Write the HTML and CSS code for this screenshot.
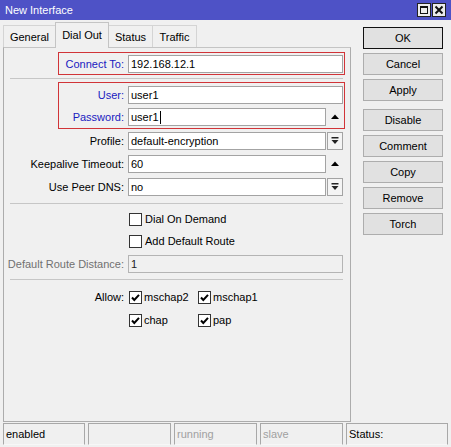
FILE: index.html
```html
<!DOCTYPE html>
<html>
<head>
<meta charset="utf-8">
<title>New Interface</title>
<link rel="stylesheet" href="styles.css">
</head>
<body>
<div class="window">
  <div class="titlebar">
    <span class="title">New Interface</span>
    <div class="tb-btns">
      <span class="tb-btn"><svg width="10" height="10" viewBox="0 0 10 10"><rect x="1.5" y="1.5" width="7" height="7" fill="none" stroke="#111" stroke-width="1"/><rect x="1" y="1" width="8" height="2" fill="#111"/></svg></span>
      <span class="tb-btn"><svg width="10" height="10" viewBox="0 0 10 10"><path d="M1.5 1.5 L8.5 8.5 M8.5 1.5 L1.5 8.5" stroke="#111" stroke-width="2"/></svg></span>
    </div>
  </div>
  <div class="main">
    <div class="left">
      <div class="tabs">
        <div class="tab t-general">General</div>
        <div class="tab t-dial active">Dial Out</div>
        <div class="tab t-status">Status</div>
        <div class="tab t-traffic">Traffic</div>
      </div>
      <div class="panel">
        <div class="redbox rb1">
          <div class="row">
            <div class="label lbl-in blue">Connect To:</div>
            <div class="input">192.168.12.1</div>
          </div>
        </div>
        <div class="sep s1"></div>
        <div class="redbox rb2">
          <div class="row">
            <div class="label lbl-in blue">User:</div>
            <div class="input">user1</div>
          </div>
          <div class="row r-pass">
            <div class="label lbl-in blue">Password:</div>
            <div class="input short">user1<span class="caret"></span></div>
            <div class="arrowbtn"><svg width="16" height="18" viewBox="0 0 16 18"><polygon points="4,11 12,11 8,6.5" fill="#000"/></svg></div>
          </div>
        </div>
        <div class="row r-profile">
          <div class="label">Profile:</div>
          <div class="input short">default-encryption</div>
          <div class="ddbtn"><svg width="14" height="16" viewBox="0 0 14 16"><rect x="3.5" y="4" width="7" height="1.5" fill="#222"/><polygon points="3.5,7 10.5,7 7,11" fill="#222"/></svg></div>
        </div>
        <div class="row r-next">
          <div class="label">Keepalive Timeout:</div>
          <div class="input short">60</div>
          <div class="arrowbtn"><svg width="16" height="18" viewBox="0 0 16 18"><polygon points="4,11 12,11 8,6.5" fill="#000"/></svg></div>
        </div>
        <div class="row r-next">
          <div class="label">Use Peer DNS:</div>
          <div class="input short">no</div>
          <div class="ddbtn"><svg width="14" height="16" viewBox="0 0 14 16"><rect x="3.5" y="4" width="7" height="1.5" fill="#222"/><polygon points="3.5,7 10.5,7 7,11" fill="#222"/></svg></div>
        </div>
        <div class="sep s2"></div>
        <div class="row cbrow r-dial">
          <span class="cb"></span><span class="cbtext">Dial On Demand</span>
        </div>
        <div class="row cbrow r-route">
          <span class="cb"></span><span class="cbtext">Add Default Route</span>
        </div>
        <div class="row r-drd">
          <div class="label gray">Default Route Distance:</div>
          <div class="input disabled">1</div>
        </div>
        <div class="sep s3"></div>
        <div class="allow">
          <div class="label">Allow:</div>
          <div class="checks">
            <div class="check"><span class="cb"><svg width="11" height="11" viewBox="0 0 11 11"><path d="M2 5.5 L4.3 8 L9 2.8" fill="none" stroke="#000" stroke-width="2"/></svg></span><span class="cbtext">mschap2</span></div>
            <div class="check"><span class="cb"><svg width="11" height="11" viewBox="0 0 11 11"><path d="M2 5.5 L4.3 8 L9 2.8" fill="none" stroke="#000" stroke-width="2"/></svg></span><span class="cbtext">mschap1</span></div>
            <div class="check"><span class="cb"><svg width="11" height="11" viewBox="0 0 11 11"><path d="M2 5.5 L4.3 8 L9 2.8" fill="none" stroke="#000" stroke-width="2"/></svg></span><span class="cbtext">chap</span></div>
            <div class="check"><span class="cb"><svg width="11" height="11" viewBox="0 0 11 11"><path d="M2 5.5 L4.3 8 L9 2.8" fill="none" stroke="#000" stroke-width="2"/></svg></span><span class="cbtext">pap</span></div>
          </div>
        </div>
      </div>
    </div>
    <div class="buttons">
      <div class="btn ok">OK</div>
      <div class="btn">Cancel</div>
      <div class="btn">Apply</div>
      <div class="btn extra">Disable</div>
      <div class="btn">Comment</div>
      <div class="btn">Copy</div>
      <div class="btn">Remove</div>
      <div class="btn">Torch</div>
    </div>
  </div>
  <div class="status">
    <div class="cell c1">enabled</div>
    <div class="cell c2"></div>
    <div class="cell c3 dim">running</div>
    <div class="cell c4 dim">slave</div>
    <div class="cell c5">Status:</div>
  </div>
</div>
</body>
</html>
```

FILE: styles.css
```css
* { box-sizing: border-box; }

body {
  margin: 0;
  background: #f0f0f0;
  font-family: "Liberation Sans", Arial, sans-serif;
  font-size: 11px;
  color: #000;
}

.window {
  width: 451px;
  height: 447px;
  display: flex;
  flex-direction: column;
  overflow: hidden;
}

.titlebar {
  height: 20px;
  flex: none;
  background: #4e52c6;
  color: #fff;
  display: flex;
  align-items: center;
  justify-content: space-between;
  padding: 0 5px 0 5px;
}

.title { font-size: 11px; }

.tb-btns { display: flex; gap: 1px; }

.tb-btn {
  width: 14px;
  height: 14px;
  border: 1px solid #222;
  background: #ececec;
  display: flex;
  align-items: center;
  justify-content: center;
}

.main {
  display: flex;
  height: 402px;
  flex: none;
}

.left {
  margin-left: 3px;
  width: 348px;
  display: flex;
  flex-direction: column;
}

.tabs {
  height: 27px;
  display: flex;
  align-items: flex-end;
}

.tab {
  height: 22px;
  border: 1px solid #d4d4d4;
  border-bottom: none;
  margin-right: -1px;
  background: #f0f0f0;
  display: flex;
  align-items: center;
  justify-content: center;
}

.tab.active {
  height: 26px;
  margin-bottom: -1px;
  position: relative;
  z-index: 1;
  border-color: #c4c4c4;
  padding-bottom: 1px;
}

.t-general { width: 53px; }
.t-dial { width: 54px; }
.t-status { width: 45px; }
.t-traffic { width: 45px; }

.panel {
  height: 375px;
  border: 1px solid #acacac;
  border-top-color: #c4c4c4;
}

.row {
  display: flex;
  align-items: center;
  height: 18px;
}

.label {
  width: 120px;
  text-align: right;
  white-space: nowrap;
}

.blue { color: #1a1ac0; }
.gray { color: #707070; }

.redbox {
  margin-left: 54px;
  width: 287px;
  border: 1px solid #d13438;
}

.redbox .lbl-in { width: 65px; }

.rb1 { margin-top: 4px; padding: 2px 1px 1px 0; }
.rb2 { margin-top: 3px; padding: 3px 1px 2px 0; }
.r-pass { margin-top: 4px; }

.input {
  margin-left: 4px;
  width: 215px;
  height: 18px;
  border: 1px solid #a3a3a3;
  background: #fff;
  padding: 0 2px;
  display: flex;
  align-items: center;
  white-space: nowrap;
}

.input.short { width: 198px; }

.input.disabled {
  background: #f0f0f0;
  border-color: #b4b4b4;
  color: #222;
}

.caret {
  display: inline-block;
  width: 1px;
  height: 13px;
  background: #000;
  margin-left: 1px;
}

.ddbtn {
  margin-left: 1px;
  width: 16px;
  height: 18px;
  border: 1px solid #a3a3a3;
  background: #f4f4f4;
  display: flex;
  align-items: center;
  justify-content: center;
}

.arrowbtn {
  margin-left: 1px;
  width: 16px;
  height: 18px;
  display: flex;
}

.r-profile { margin-top: 3px; }
.r-next { margin-top: 5px; }

.sep {
  margin-left: 6px;
  width: 333px;
  border-top: 1px solid #c6c6c6;
}

.s1 { margin-top: 3px; }
.s2 { margin-top: 7px; }
.s3 { margin-top: 6px; }

.cbrow { padding-left: 125px; }
.r-dial { margin-top: 6px; }
.r-route { margin-top: 4px; }
.r-drd { margin-top: 5px; }

.cb {
  width: 13px;
  height: 13px;
  border: 1px solid #333;
  background: #fff;
  display: flex;
  align-items: center;
  justify-content: center;
  flex: none;
}

.cbtext { margin-left: 3px; }

.allow {
  display: flex;
  align-items: flex-start;
  margin-top: 8px;
}

.allow .label {
  height: 18px;
  line-height: 18px;
}

.checks {
  margin-left: 5px;
  display: grid;
  grid-template-columns: 69px 69px;
  row-gap: 5px;
}

.check {
  display: flex;
  align-items: center;
  height: 18px;
}

.check .cbtext { margin-left: 2px; }

.buttons {
  margin-left: 12px;
  padding-top: 7px;
  display: flex;
  flex-direction: column;
  gap: 4px;
}

.btn {
  width: 80px;
  height: 22px;
  border: 1px solid #adadad;
  background: #e1e1e1;
  display: flex;
  align-items: center;
  justify-content: center;
}

.btn.ok { border-color: #111; }
.btn.extra { margin-top: 4px; }

.status {
  margin-top: 1px;
  height: 22px;
  padding-left: 3px;
  display: flex;
  gap: 3px;
}

.cell {
  height: 22px;
  border: 1px solid #a8a8a8;
  border-bottom-color: #f7f7f7;
  padding-left: 2px;
  display: flex;
  align-items: center;
  white-space: nowrap;
}

.c1 { width: 82px; }
.c2 { width: 83px; }
.c3 { width: 83px; }
.c4 { width: 83px; }
.c5 { width: 102px; }

.dim { color: #a0a0a0; }
```
